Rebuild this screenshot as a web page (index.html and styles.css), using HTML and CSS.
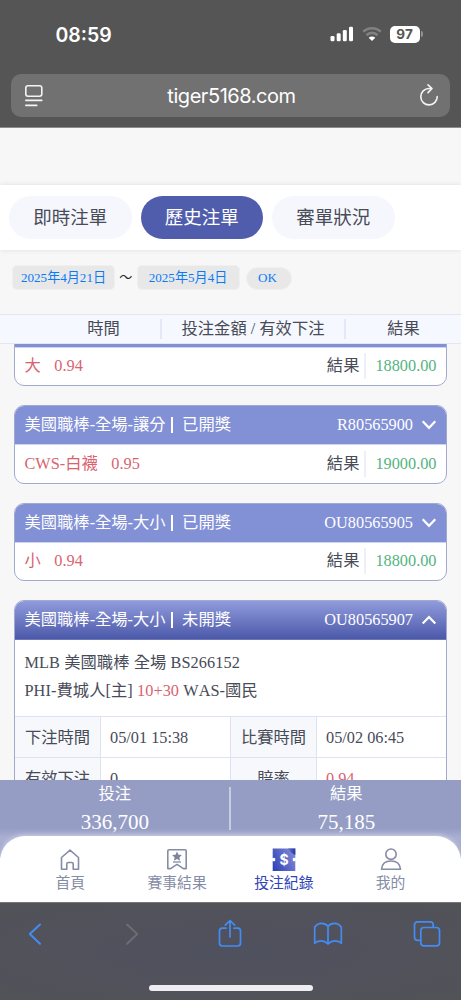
FILE: index.html
```html
<!DOCTYPE html>
<html lang="zh-Hant">
<head>
<meta charset="utf-8">
<meta name="viewport" content="width=device-width, initial-scale=1">
<title>歷史注單</title>
<link rel="stylesheet" href="styles.css">
</head>
<body>
<div class="phone">
  <header class="chrome-top">
    <div class="status">
      <span class="clock">08:59</span>
      <svg class="signal" width="24" height="16" viewBox="0 0 24 16" fill="#fff"><rect x="0.5" y="10" width="4" height="5.3" rx="1.3"/><rect x="6.7" y="7.3" width="4" height="8" rx="1.3"/><rect x="12.8" y="4" width="4" height="11.3" rx="1.3"/><rect x="19" y="0.8" width="4" height="14.5" rx="1.3"/></svg>
      <svg class="wifi" width="20" height="16" viewBox="0 0 20 16" fill="none" stroke-width="2.7"><path d="M1.3 5.8a12.4 12.4 0 0 1 17.4 0" stroke="#818181"/><path d="M4.4 9.2a8 8 0 0 1 11.2 0" stroke="#818181"/><path d="M10 15l-3.3-3.2a4.7 4.7 0 0 1 6.6 0z" fill="#fff"/></svg>
      <span class="battery">97</span><span class="battery-tip"></span>
    </div>
    <div class="address">
      <svg width="20" height="24" viewBox="0 0 20 24" fill="none" stroke="#f4f4f4" stroke-width="1.6" stroke-linecap="round"><rect x="1.8" y="1.8" width="16" height="10.4" rx="2.2"/><path d="M1.8 16.4h16M1.8 21.4h11"/></svg>
      <span>tiger5168.com</span>
      <svg width="20" height="24" viewBox="0 0 20 24" fill="none" stroke="#f4f4f4" stroke-width="1.6" stroke-linecap="round" stroke-linejoin="round"><path d="M12.5 4.5H10A8.2 8.2 0 1 0 18.2 12.500M9 .8l4 3.700-4 4.100"/></svg>
    </div>
  </header>

  <main class="page">
    <nav class="tabs">
      <a class="tab">即時注單</a>
      <a class="tab active">歷史注單</a>
      <a class="tab">審單狀況</a>
    </nav>
    <div class="filter">
      <span class="date">2025年4月21日</span>
      <span class="tilde">～</span>
      <span class="date">2025年5月4日</span>
      <span class="ok">OK</span>
    </div>
    <div class="columns">
      <span class="col-time">時間</span>
      <span class="col-amount">投注金額 / 有效下注</span>
      <span class="col-result">結果</span>
    </div>
    <div class="list">
      <article class="card">
        <div class="card-head"></div>
        <div class="card-row"><span class="pick">大<b>0.94</b></span><span class="label">結果</span><span class="amount">18800.00</span></div>
      </article>
      <article class="card">
        <div class="card-head"><span>美國職棒-全場-讓分</span><i class="bar"></i><span>已開獎</span><span class="number">R80565900</span><svg width="16" height="10" viewBox="0 0 16 10"><path d="M1.7 1.2L8 7.8l6.3-6.6"/></svg></div>
        <div class="card-row"><span class="pick">CWS-白襪<b>0.95</b></span><span class="label">結果</span><span class="amount">19000.00</span></div>
      </article>
      <article class="card">
        <div class="card-head"><span>美國職棒-全場-大小</span><i class="bar"></i><span>已開獎</span><span class="number">OU80565905</span><svg width="16" height="10" viewBox="0 0 16 10"><path d="M1.7 1.2L8 7.8l6.3-6.6"/></svg></div>
        <div class="card-row"><span class="pick">小<b>0.94</b></span><span class="label">結果</span><span class="amount">18800.00</span></div>
      </article>
      <article class="card">
        <div class="card-head open"><span>美國職棒-全場-大小</span><i class="bar"></i><span>未開獎</span><span class="number">OU80565907</span><svg width="16" height="10" viewBox="0 0 16 10"><path d="M1.7 8.6L8 2l6.3 6.6"/></svg></div>
        <div class="match">
          <div>MLB 美國職棒 全場 BS266152</div>
          <div>PHI-費城人[主] <em>10+30</em> WAS-國民</div>
        </div>
        <div class="grid">
          <span class="key">下注時間</span><span class="value">05/01 15:38</span><span class="key">比賽時間</span><span class="value">05/02 06:45</span>
          <span class="key">有效下注</span><span class="value">0</span><span class="key">賠率</span><span class="value"><em>0.94</em></span>
        </div>
      </article>
    </div>
    <div class="totals">
      <div class="total"><span>投注</span><strong>336,700</strong></div>
      <i></i>
      <div class="total"><span>結果</span><strong>75,185</strong></div>
    </div>
    <nav class="menu">
      <a class="item"><svg width="24" height="24" viewBox="0 0 24 24" fill="none" stroke="#858ca5" stroke-width="1.6" stroke-linejoin="round"><path d="M3.5 22.2V10.500L12 3.100 20.5 10.500v11.700h-5.300v-5.200q0-1.500-1.500-1.500h-3.400q-1.500 0-1.500 1.500v5.200z"/></svg>首頁</a>
      <a class="item"><svg width="24" height="24" viewBox="0 0 24 24" fill="none" stroke="#858ca5" stroke-width="1.6" stroke-linejoin="round"><path d="M2.8 21.6V4q0-1.2 1.2-1.2h16q1.2 0 1.2 1.2v17.6h-2.8L12 17.4l-6.4 4.2z"/><path d="M8 15h8" stroke-width="1.3"/><path d="M12 4.6l1.5 3.1 3.4.4-2.5 2.3.7 3.4-3.1-1.7-3.1 1.7.7-3.4-2.500-2.300 3.400-.4z" fill="#7c849f" stroke="none"/></svg>賽事結果</a>
      <a class="item current"><svg width="24" height="24" viewBox="0 0 24 24"><defs><linearGradient id="ticket" x1="0" y1="1" x2="1" y2="0.5"><stop offset="0" stop-color="#2c3eb5"/><stop offset="1" stop-color="#7783d2"/></linearGradient><linearGradient id="edge" x1="0" x2="1"><stop offset="0" stop-color="#6673c6"/><stop offset="1" stop-color="#2338ab"/></linearGradient></defs><path d="M.7 1.5h22.6V11a2 2 0 0 0 0 3v10H.7V14a2 2 0 0 0 0-3z" fill="url(#ticket)"/><path d="M16 1.5h7.3V8q-4-1.5-7.3-6.5z" fill="url(#edge)"/><path d="M.7 11.2a2 2 0 0 1 2.5 0v2.6a2 2 0 0 1-2.5 0zM23.3 11.2a2 2 0 0 0-2.5 0v2.6a2 2 0 0 0 2.5 0z" fill="#fff"/><text x="12" y="17.5" text-anchor="middle" class="dollar">$</text></svg>投注紀錄</a>
      <a class="item"><svg width="24" height="24" viewBox="0 0 24 24" fill="none" stroke="#858ca5" stroke-width="1.6" stroke-linejoin="round"><circle cx="12" cy="7.2" r="5.2"/><path d="M2.5 22.2q.7-8.2 9.5-8.2t9.5 8.2z"/></svg>我的</a>
    </nav>
  </main>

  <footer class="chrome-bottom">
    <div class="tools">
      <svg width="28" height="32" viewBox="0 0 28 32"><path d="M19 6.5L8.8 16 19 25.8" stroke-width="2"/></svg>
      <svg class="off" width="28" height="32" viewBox="0 0 28 32"><path d="M9 6.5L19.2 16 9 25.8" stroke-width="2"/></svg>
      <svg width="28" height="32" viewBox="0 0 28 32"><path d="M10 10.2H6.3Q3.5 10.2 3.5 13v12q0 3 3 3h15q3 0 3-3V13q0-2.8-2.8-2.8H18M14 19V2.7M9.3 7.2L14 2.5l4.7 4.7"/></svg>
      <svg width="30" height="32" viewBox="0 0 30 32"><path d="M15 8.2Q12.5 5.3 8.5 5.3T1.7 9v16.2q3-2.3 6.6-2.3T15 26q3.1-3.1 6.7-3.1t6.6 2.3V9q-2.8-3.7-6.8-3.7T15 8.2zV26"/></svg>
      <svg width="28" height="32" viewBox="0 0 28 32"><rect x="7.8" y="9.5" width="18.7" height="18.4" rx="3.2"/><path d="M7.5 22.3H4.5q-3 0-3-3V6.9q0-3 3-3h12.7q3 0 3 3v2.3"/></svg>
    </div>
    <div class="home-bar"></div>
  </footer>
</div>
</body>
</html>
```
FILE: styles.css
```css
* { box-sizing: border-box; }
body {
  margin: 0;
  font-family: "Liberation Serif", "Noto Sans CJK TC", serif;
  font-size: 16.3px;
  font-kerning: none;
  color: #484b58;
  white-space: nowrap;
}
svg { display: block; flex: none; }
em, b, i { font-style: normal; font-weight: inherit; }
.phone { width: 461px; height: 1000px; display: flex; flex-direction: column; overflow: hidden; }

.chrome-top { height: 128px; flex: none; background: #555; border-bottom: 1px solid #8d8d8a; }
.status { height: 74px; padding: 23px 38px 0 55.5px; display: flex; align-items: flex-start; font-family: Inter, sans-serif; color: #fff; }
.clock { width: 274px; font-size: 19.5px; line-height: 24px; font-weight: 600; }
.signal { margin-top: 3px; }
.wifi { margin: 3px 0 0 8px; }
.battery { margin: 3px 0 0 8px; width: 30px; height: 17px; border-radius: 5px; background: #fff; color: #555; font-size: 13.5px; line-height: 17px; font-weight: 700; text-align: center; flex: none; }
.battery-tip { width: 2px; height: 6px; margin: 8px 0 0 1px; border-radius: 0 2px 2px 0; background: #929292; }
.address { margin: 0 11px; height: 43px; padding: 0 11px 0 13px; border-radius: 10px; background: #717171; display: flex; align-items: center; justify-content: space-between; color: #fff; font: 20px/24px Inter, sans-serif; letter-spacing: -0.45px; }

.page { height: 774px; flex: none; display: flex; flex-direction: column; background: #f7f7f7; padding-top: 57px; }
.tabs { height: 65px; flex: none; background: #fff; padding: 11px 9px; display: flex; gap: 9px; box-shadow: 0 0 5px rgba(0,0,0,.1); }
.tab { width: 122.5px; height: 43px; border-radius: 22px; background: #f6f7fc; text-align: center; font-size: 18.5px; line-height: 44px; }
.tab.active { background: #505dac; color: #fff; }
.filter { height: 64px; flex: none; padding: 15px 12px 0; display: flex; align-items: flex-start; font-size: 13.1px; color: #0b7bf5; }
.date { width: 103px; height: 25px; border: 1px solid #f0f0f0; border-radius: 5px; background: #e8e8e8; line-height: 24px; text-align: center; }
.tilde { width: 21.5px; line-height: 25px; text-align: center; color: #222; }
.ok { width: 46px; height: 23px; margin: 2px 0 0 6px; border: 1px solid #f0f0f0; border-radius: 12px; background: #e8e8e8; line-height: 20px; padding-right: 2px; text-align: center; }
.columns { height: 30px; flex: none; padding: 4px 0; display: grid; grid-template-columns: 160px 184px 117px; background: #f5f8fe; border: solid #e3e6f3; border-width: 1px 0; text-align: center; line-height: 20px; }
.columns span + span { border-left: 2px solid #e5e8f4; }
.col-time { padding-left: 47px; }

.list { height: 436px; flex: none; overflow: hidden; padding: 0 14px; display: flex; flex-direction: column; gap: 19px; }
.card { width: 433px; height: 78.5px; flex: none; border: 1px solid #a2a9cf; border-radius: 10px; background: #fff; overflow: hidden; }
.card:first-child { margin-top: -36.5px; }
.card:last-child { height: 240px; }
.card-head { height: 39px; padding: 0 9px 0 9.5px; display: flex; align-items: center; background: #8290d6; color: #fff; border-bottom: 1px solid #ccd2ef; line-height: 24px; }
.card-head.open { background: linear-gradient(#909bdc, #4c59a9); border-bottom-color: #6c77b8; }
.bar { width: 2.5px; height: 16px; margin: 0 9px 0 5px; background: #fff; }
.number { margin: 0 8px 0 auto; }
.card-head svg { fill: none; stroke: #fff; stroke-width: 2.2; }
.card-row { height: 37px; padding: 0 9.5px; display: flex; align-items: center; line-height: 24px; }
.pick, em { color: #d8636f; }
.pick b { margin-left: 13.5px; }
.label { margin-left: auto; }
.amount { margin-left: 5px; padding-left: 9px; border-left: 2px solid #edf0f9; line-height: 26px; color: #55b382; }
.match { height: 75.5px; padding: 9px 9.5px; line-height: 28px; letter-spacing: 0.07px; }
.grid { display: grid; grid-template-columns: 86px 130px 86px 129px; grid-auto-rows: 41px; line-height: 41px; }
.grid span { border-top: 1px solid #dfe2f2; }
.key { background: #f7f8fc; text-align: center; border-right: 1px solid #dfe2f2; }
.value { padding-left: 9px; border-right: 1px solid #dfe2f2; }
.value:nth-child(4n) { border-right: 0; }

.totals { height: 78px; flex: none; display: flex; background: linear-gradient(#959dc5 48px, #aab0d2 58px, #9da4ca); color: #fff; }
.totals i { width: 2px; height: 43px; margin: 7px 1px 0 -1px; background: #c7cce3; }
.total { flex: 1; display: flex; flex-direction: column; align-items: center; line-height: 28px; }
.total strong { font-weight: 400; font-size: 21px; line-height: 28px; }
.menu { height: 66px; flex: none; margin-top: -22px; padding: 11px 17px 0; display: grid; grid-template-columns: repeat(4, 1fr); position: relative; z-index: 1; background: #fff; border-radius: 25px 25px 0 0; box-shadow: 0 -1px 5px rgba(255,255,255,.45); color: #858ca5; font-size: 14.8px; }
.item { display: flex; flex-direction: column; align-items: center; line-height: 24px; }
.item.current { color: #3044b7; }
.dollar { font: 700 14px Inter, sans-serif; fill: #fff; }

.chrome-bottom { height: 98px; flex: none; background: radial-gradient(ellipse at 50% 50%, #50515e 10%, #525358 100%); border-top: 1px solid #777; position: relative; z-index: 2; }
.tools { height: 82px; padding: 15px 20.5px 0 21px; display: flex; justify-content: space-between; }
.tools svg { fill: none; stroke: #438cf5; stroke-width: 1.7; stroke-linecap: round; stroke-linejoin: round; }
.tools .off { stroke: #6b6d74; }
.home-bar { width: 164px; height: 6px; margin: 0 auto; border-radius: 3px; background: #efedf1; }
```
